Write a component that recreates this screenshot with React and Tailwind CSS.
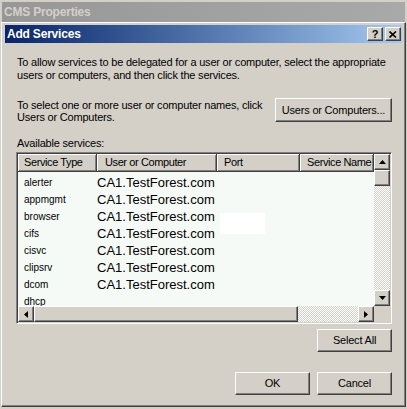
import React from "react";

const raised =
  "bg-[#d4d0c8] border border-t-white border-l-white border-r-[#404040] border-b-[#404040] shadow-[inset_-1px_-1px_#808080]";
const checker =
  "bg-[repeating-conic-gradient(#d4d0c8_0_25%,#ffffff_0_50%)] bg-[length:2px_2px]";

const services = [
  { type: "alerter", host: "CA1.TestForest.com" },
  { type: "appmgmt", host: "CA1.TestForest.com" },
  { type: "browser", host: "CA1.TestForest.com" },
  { type: "cifs", host: "CA1.TestForest.com" },
  { type: "cisvc", host: "CA1.TestForest.com" },
  { type: "clipsrv", host: "CA1.TestForest.com" },
  { type: "dcom", host: "CA1.TestForest.com" },
  { type: "dhcp", host: "" },
];

function Arrow({ dir }) {
  // small black triangles used in the scroll buttons
  const pts = {
    up: "0,4 7,4 3.5,0",
    down: "0,0 7,0 3.5,4",
    left: "4,0 4,7 0,3.5",
    right: "0,0 0,7 4,3.5",
  }[dir];
  const vertical = dir === "up" || dir === "down";
  return (
    <svg width={vertical ? 7 : 4} height={vertical ? 4 : 7} viewBox={vertical ? "0 0 7 4" : "0 0 4 7"}>
      <polygon points={pts} fill="#000" />
    </svg>
  );
}

function ScrollButton({ dir }) {
  return (
    <div className={`${raised} w-[16px] h-[16px] flex items-center justify-center shrink-0`}>
      <Arrow dir={dir} />
    </div>
  );
}

function Button({ children, className = "" }) {
  return (
    <button
      className={`${raised} h-[23px] w-[75px] flex items-center justify-center text-[11px] tracking-[-0.2px] text-black ${className}`}
    >
      {children}
    </button>
  );
}

export default function App() {
  return (
    <div className="w-[407px] h-[409px] bg-[#d4d0c8] overflow-hidden font-['Liberation_Sans',Arial,sans-serif] text-black">
      {/* parent window caption (inactive) */}
      <div className="pt-[2px] px-[2px]">
        <div className="h-[20px] bg-gradient-to-r from-[#979797] to-[#a9a9a9] flex items-center pl-[2px] text-[12px] font-bold tracking-[-0.2px] text-[#d4d0c8]">
          CMS Properties
        </div>
      </div>

      {/* dialog */}
      <div className="ml-[1px] w-[405px] h-[385px] bg-[#d4d0c8] border border-t-white border-l-white border-r-[#404040] border-b-[#404040] shadow-[inset_-1px_-1px_#808080] pt-[2px] px-[3px]">
        {/* caption */}
        <div className="h-[18px] bg-gradient-to-r from-[#0a246a] to-[#a6caf0] flex items-center justify-between pl-[2px] pr-[1px]">
          <span className="text-white text-[12px] font-bold tracking-[-0.2px]">Add Services</span>
          <div className="flex gap-[2px]">
            <div className={`${raised} w-[16px] h-[14px] flex items-center justify-center text-[11px] font-bold leading-none`}>
              ?
            </div>
            <div className={`${raised} w-[16px] h-[14px] flex items-center justify-center`}>
              <svg width="8" height="7" viewBox="0 0 8 7">
                <path d="M0.5 0.5 L7 6.5 M7 0.5 L0.5 6.5" stroke="#000" strokeWidth="1.6" />
              </svg>
            </div>
          </div>
        </div>

        {/* body */}
        <div className="pl-[12px] pr-[10px] text-[11px] tracking-[-0.2px]">
          <p className="mt-[13px] leading-[13px]">
            To allow services to be delegated for a user or computer, select the appropriate
            <br />
            users or computers, and then click the services.
          </p>

          <div className="mt-[16px] flex items-start justify-between">
            <p className="pt-[1px] leading-[12px]">
              To select one or more user or computer names, click
              <br />
              Users or Computers.
            </p>
            <Button className="w-[117px] h-[24px]">Users or Computers...</Button>
          </div>

          <p className="mt-[14px] leading-[12px]">Available services:</p>

          {/* list view */}
          <div className="mt-[3px] -ml-[1px] w-[376px] h-[172px] border border-t-[#808080] border-l-[#808080] border-r-white border-b-white shadow-[inset_1px_1px_#404040,inset_-1px_-1px_#d4d0c8] p-[1px] tracking-normal">
            <div className="grid grid-cols-[356px_16px] grid-rows-[152px_16px]">
              <div className="relative overflow-hidden bg-[#f6faf6]">
                <div className="flex h-[18px] bg-[#d4d0c8] text-[11px] tracking-[-0.4px]">
                  {[
                    ["Service Type", "w-[79px] pl-[6px]"],
                    ["User or Computer", "w-[120px] pl-[8px]"],
                    ["Port", "w-[83px] pl-[7px]"],
                    ["Service Name", "w-[74px] pl-[7px]"],
                  ].map(([label, cls]) => (
                    <div
                      key={label}
                      className={`${cls} shrink-0 flex items-center whitespace-nowrap overflow-hidden border-r border-b border-r-[#404040] border-b-[#404040] shadow-[inset_1px_1px_#ffffff,inset_-1px_-1px_#808080]`}
                    >
                      {label}
                    </div>
                  ))}
                </div>
                <div className="pt-[2px]">
                  {services.map((s) => (
                    <div key={s.type} className="h-[17px] flex items-center">
                      <div className="w-[79px] pl-[6px] text-[10px]">{s.type}</div>
                      <div className="text-[13px] whitespace-nowrap">{s.host}</div>
                    </div>
                  ))}
                </div>
                <div className="absolute left-[202px] top-[59px] w-[45px] h-[21px] bg-white" />
              </div>

              {/* vertical scrollbar */}
              <div className="flex flex-col">
                <ScrollButton dir="up" />
                <div className={`${raised} w-[16px] h-[16px] shrink-0`} />
                <div className={`flex-1 ${checker}`} />
                <ScrollButton dir="down" />
              </div>

              {/* horizontal scrollbar */}
              <div className="flex">
                <ScrollButton dir="left" />
                <div className={`${raised} w-[264px] h-[16px] shrink-0`} />
                <div className={`flex-1 ${checker}`} />
                <ScrollButton dir="right" />
              </div>
              <div className="bg-[#d4d0c8]" />
            </div>
          </div>

          <div className="mt-[5px] flex justify-end">
            <Button>Select All</Button>
          </div>

          <div className="mt-[20px] flex justify-end gap-[7px]">
            <Button>OK</Button>
            <Button>Cancel</Button>
          </div>
        </div>
      </div>
    </div>
  );
}
